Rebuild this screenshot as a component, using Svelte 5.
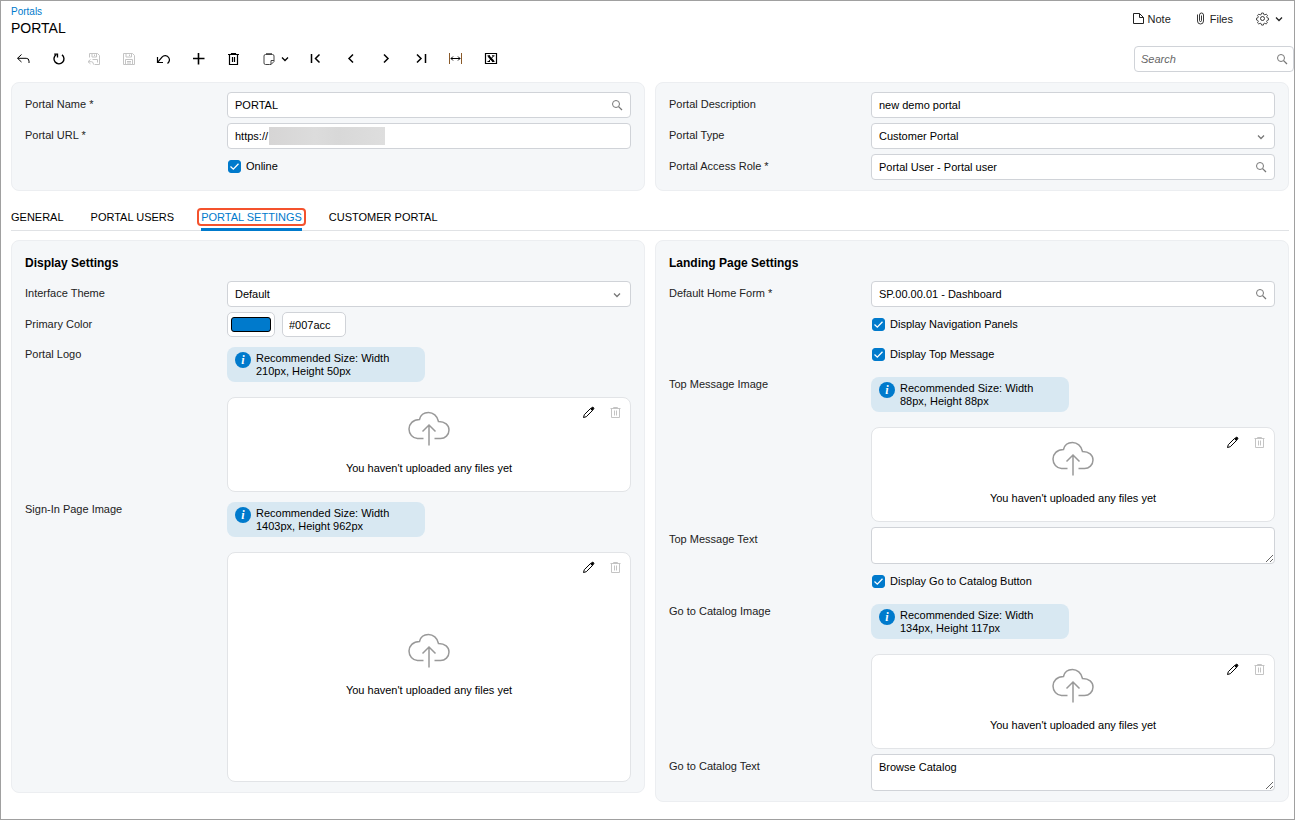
<script lang="ts">
    type Hint = { id: string; label: string; size: string; tall?: boolean };

    let portalName = "PORTAL";
    let portalUrl = "https://";
    let online = true;
    let description = "new demo portal";
    let portalType = "Customer Portal";
    let accessRole = "Portal User - Portal user";

    let theme = "Default";
    let primaryColor = "#007acc";

    let homeForm = "SP.00.00.01 - Dashboard";
    let navigationPanels = true;
    let topMessage = true;
    let topMessageText = "";
    let catalogButton = true;
    let catalogText = "Browse Catalog";

    const tabs = ["GENERAL", "PORTAL USERS", "PORTAL SETTINGS", "CUSTOMER PORTAL"];
    let activeTab = "PORTAL SETTINGS";

    const displayImages: Hint[] = [
        { id: "logo", label: "Portal Logo", size: "210px, Height 50px" },
        { id: "signin", label: "Sign-In Page Image", size: "1403px, Height 962px", tall: true },
    ];
    const topImage: Hint = { id: "top-image", label: "Top Message Image", size: "88px, Height 88px" };
    const catalogImage: Hint = { id: "catalog-image", label: "Go to Catalog Image", size: "134px, Height 117px" };

    const tools = [
        { name: "Back", icon: "back" },
        { name: "Refresh", icon: "refresh" },
        { name: "Save and close", icon: "saveclose", disabled: true },
        { name: "Save", icon: "save", disabled: true },
        { name: "Undo", icon: "undo" },
        { name: "Add", icon: "plus" },
        { name: "Delete", icon: "trash" },
        { name: "Clipboard", icon: "clipboard", menu: true },
        { name: "First", icon: "first" },
        { name: "Previous", icon: "prev" },
        { name: "Next", icon: "next" },
        { name: "Last", icon: "last" },
        { name: "Fit columns", icon: "fit" },
        { name: "Export to Excel", icon: "excel" },
    ];
</script>

{#snippet icon(name: string)}
    <svg class="icon" viewBox="0 0 16 16" width="16" height="16" aria-hidden="true">
        {#if name === "back"}
            <path d="M5.500 3.500 1.500 7.300 5.500 11M1.800 7.300h8.400a2.800 2.800 0 0 1 2.800 2.800v1.900" />
        {:else if name === "refresh"}
            <path d="M5.200 3.700A5 5 0 1 0 11 3.900" stroke-width="1.400" />
            <path d="M3.200 3.200h3.300v3.300" stroke-width="1.300" />
        {:else if name === "save"}
            <path d="M2.500 2.500h9l2 2v9h-11zM5 2.500v3.500h5.500v-3.500M4.500 13.500v-5h7v5M8.500 3.500v1.500M6 10.500h4M6 12h4" />
        {:else if name === "saveclose"}
            <path d="M3.500 6.500v-4h8l2 2v9H8.500M6 2.500v3.500h4.500v-3.500M8.500 3.500v1.500M6.500 8.500h5v3M4.500 8.500l-2.500 2.200 2.500 2.200M2.200 10.700h3.300q2 0 2 2.800" />
        {:else if name === "undo"}
            <path d="M1.500 6v5.500h5.500" stroke-width="1.200" />
            <path d="M1.800 11.200l4.200-5a4.200 4.200 0 0 1 6.800.5c1.200 2 .5 4.200-1.300 5.800" stroke-width="1.200" />
        {:else if name === "plus"}
            <path d="M7.500 2v11.500M2 7.500h11.500" stroke-width="1.600" />
        {:else if name === "trash"}
            <path d="M2 3.500h11M5.500 3v-.500h4V3M3.500 4v9.500h8V4M6.500 6v5M8.500 6v5" stroke-width="1.200" />
        {:else if name === "trash-small"}
            <path d="M2.500 3.500h10M5.500 3.500v-1h4v1M3.500 3.500v9h8v-9M6.500 5.500v5M8.500 5.500v5" />
        {:else if name === "clipboard"}
            <path d="M8.500 13.500H4.500q-1.500 0-1.500-1.500V5q0-1.500 1.500-1.500h7q1.500 0 1.500 1.500v5.500l-3 3h-1.500M13 9.500h-3v4" stroke="#444" />
            <path d="M5 3h6" stroke="#444" stroke-width="1.600" />
        {:else if name === "first"}
            <path d="M3.500 3v9M11.500 3.500 7.500 7.500l4 4" stroke-width="1.500" />
        {:else if name === "prev"}
            <path d="M10 3.500 6 7.500l4 4" stroke-width="1.500" />
        {:else if name === "next"}
            <path d="M6 3.500l4 4-4 4" stroke-width="1.500" />
        {:else if name === "last"}
            <path d="M4 3.500l4 4-4 4M12.500 3v9" stroke-width="1.500" />
        {:else if name === "fit"}
            <path d="M1.500 2v11M13.500 2v11" stroke="#8a5a2a" />
            <path d="M3 7.500h9M5 5.500l-2 2 2 2M10 5.500l2 2-2 2" />
        {:else if name === "excel"}
            <path d="M2.500 2.500h11v10h-11z" stroke-width="1.200" />
            <path d="M5.500 5l5 5.500" stroke-width="2" />
            <path d="M10.500 5l-5 5.500M4.500 4.800h2.500M9 4.800h2.500M4.500 10.500h2.500M9 10.500h2.500" />
        {:else if name === "search"}
            <circle cx="7" cy="7" r="3.500" />
            <path d="M9.600 9.600l3.400 3.400" stroke-width="1.300" />
        {:else if name === "pencil"}
            <path d="M2.500 12.500l.8-2.800 6.200-6.200 2 2-6.200 6.200z" />
            <path d="M9.700 3.800l1.300-1.300q.8-.6 1.500.1t.1 1.500l-1.300 1.300z" fill="currentColor" />
        {:else if name === "note"}
            <path d="M2.500 2.500h6l4 4v6h-10zM8.500 2.500v4h4" />
        {:else if name === "clip"}
            <path d="M4.500 3.500v6.500a3 3 0 0 0 6 0V4a2 2 0 0 0-4 0v5.500a1 1 0 0 0 2 0V4.500" stroke-width=".900" />
        {:else if name === "gear"}
            <circle cx="7.500" cy="7.500" r="2" stroke-width=".900" />
            <path d="M6.600 2h1.800l.4 1.500 1.100.4 1.300-.8 1.300 1.300-.8 1.300.4 1.100 1.400.4V9l-1.400.4-.5 1.100.8 1.300-1.300 1.200-1.300-.8-1.100.5-.3 1.400H6.600l-.4-1.400-1.100-.5-1.300.8-1.300-1.200.8-1.300-.5-1.100L1.500 9V7.200l1.400-.4.4-1.100-.8-1.300 1.300-1.300 1.300.8 1.100-.4z" stroke-width=".800" />
        {/if}
    </svg>
{/snippet}

{#snippet chevron()}
    <svg class="chevron" viewBox="0 0 8 8" width="8" height="8" aria-hidden="true">
        <path d="M1 2.500 4 5.500l3-3" />
    </svg>
{/snippet}

{#snippet tick()}
    <svg class="tick" viewBox="0 0 13 13" width="13" height="13" aria-hidden="true">
        <path d="M2.500 6.500 5.300 9.200 10.500 3.800" />
    </svg>
{/snippet}

{#snippet upload(image: Hint)}
    <span class="label" id={image.id}>{image.label}</span>
    <div class="upload" role="group" aria-labelledby={image.id}>
        <div class="hint">
            <span class="info">i</span>
            <span>Recommended Size: Width {image.size}</span>
        </div>
        <div class="dropzone" class:tall={image.tall}>
            <svg class="cloud" viewBox="0 0 42 36" width="42" height="36" aria-hidden="true">
                <path d="M15.500 27.500H9.500C4.500 27 1 23 1 18s4-9.500 10.500-9.500C12.500 4 16 1.500 20.500 1.500S29.500 5 30.500 10.500C37 10.500 41 14 41 19s-4 8.500-8.500 8.500H26.500" />
                <path d="M21 34.500V14M14.500 20.500 21 14l6.500 6.500" />
            </svg>
            <p>You haven't uploaded any files yet</p>
            <div class="actions">
                <button aria-label="Edit">{@render icon("pencil")}</button>
                <button aria-label="Remove" disabled>{@render icon("trash-small")}</button>
            </div>
        </div>
    </div>
{/snippet}

<div class="page">
    <header>
        <div>
            <a class="crumb" href="#portals">Portals</a>
            <h1>PORTAL</h1>
        </div>
        <div class="links">
            <button class="note">{@render icon("note")}Note</button>
            <button class="files">{@render icon("clip")}Files</button>
            <button class="gear" aria-label="Settings">{@render icon("gear")}{@render chevron()}</button>
        </div>
    </header>

    <div class="toolbar">
        {#each tools as tool}
            <button aria-label={tool.name} disabled={tool.disabled}>
                {@render icon(tool.icon)}
                {#if tool.menu}{@render chevron()}{/if}
            </button>
        {/each}
        <div class="field search">
            <input type="search" placeholder="Search" aria-label="Search" />
            <button aria-label="Run search">{@render icon("search")}</button>
        </div>
    </div>

    <main>
        <div class="columns">
            <section class="panel">
                <label class="label" for="name">Portal Name *</label>
                <div class="field">
                    <input id="name" bind:value={portalName} />
                    <button aria-label="Select portal">{@render icon("search")}</button>
                </div>
                <label class="label" for="url">Portal URL *</label>
                <div class="field">
                    <input id="url" bind:value={portalUrl} />
                    <span class="mask"></span>
                </div>
                <label class="check">
                    <input type="checkbox" bind:checked={online} />{@render tick()}Online
                </label>
            </section>
            <section class="panel">
                <label class="label" for="description">Portal Description</label>
                <div class="field"><input id="description" bind:value={description} /></div>
                <label class="label" for="type">Portal Type</label>
                <div class="field">
                    <select id="type" bind:value={portalType}>
                        <option>Customer Portal</option>
                    </select>
                    {@render chevron()}
                </div>
                <label class="label" for="role">Portal Access Role *</label>
                <div class="field">
                    <input id="role" bind:value={accessRole} />
                    <button aria-label="Select role">{@render icon("search")}</button>
                </div>
            </section>
        </div>

        <div class="tabs" role="tablist">
            {#each tabs as tab}
                <button role="tab" aria-selected={tab === activeTab} class:active={tab === activeTab} on:click={() => (activeTab = tab)}>
                    {tab}
                </button>
            {/each}
        </div>

        <div class="columns">
            <section class="panel">
                <h2>Display Settings</h2>
                <label class="label" for="theme">Interface Theme</label>
                <div class="field">
                    <select id="theme" bind:value={theme}>
                        <option>Default</option>
                    </select>
                    {@render chevron()}
                </div>
                <label class="label" for="hex">Primary Color</label>
                <div class="color">
                    <input type="color" aria-label="Pick primary color" bind:value={primaryColor} />
                    <input id="hex" class="hex" bind:value={primaryColor} />
                </div>
                {#each displayImages as image}
                    {@render upload(image)}
                {/each}
            </section>
            <section class="panel">
                <h2>Landing Page Settings</h2>
                <label class="label" for="home">Default Home Form *</label>
                <div class="field">
                    <input id="home" bind:value={homeForm} />
                    <button aria-label="Select form">{@render icon("search")}</button>
                </div>
                <label class="check">
                    <input type="checkbox" bind:checked={navigationPanels} />{@render tick()}Display Navigation Panels
                </label>
                <label class="check">
                    <input type="checkbox" bind:checked={topMessage} />{@render tick()}Display Top Message
                </label>
                {@render upload(topImage)}
                <label class="label" for="top-text">Top Message Text</label>
                <textarea id="top-text" bind:value={topMessageText}></textarea>
                <label class="check">
                    <input type="checkbox" bind:checked={catalogButton} />{@render tick()}Display Go to Catalog Button
                </label>
                {@render upload(catalogImage)}
                <label class="label" for="catalog-text">Go to Catalog Text</label>
                <textarea id="catalog-text" bind:value={catalogText}></textarea>
            </section>
        </div>
    </main>
</div>

<style>
    .page {
        box-sizing: border-box;
        min-height: 100vh;
        margin-right: 1px;
        border: 1px solid #a0a0a0;
        background: #fff;
        color: #000;
        font: 11px/16px "Liberation Sans", Arial, sans-serif;
    }

    .page * {
        box-sizing: border-box;
    }

    button,
    input,
    select,
    textarea {
        font: inherit;
        color: inherit;
    }

    button {
        display: flex;
        align-items: center;
        padding: 0;
        border: 0;
        background: none;
        cursor: pointer;
    }

    svg {
        flex: none;
        fill: none;
        stroke: currentColor;
    }

    button:disabled {
        color: #c4c4c4;
        cursor: default;
    }

    header {
        display: flex;
        justify-content: space-between;
        align-items: flex-start;
        height: 45px;
        padding: 4px 11px 0 10px;
    }

    .crumb {
        display: block;
        font-size: 10px;
        line-height: 14px;
        color: #007acc;
        text-decoration: none;
    }

    h1 {
        margin: 0;
        font-size: 14px;
        font-weight: normal;
        line-height: 18px;
    }

    .links {
        display: flex;
        gap: 22px;
        padding-top: 6px;
        color: #222;
    }

    .note,
    .files {
        gap: 1px;
    }

    .gear {
        gap: 4px;
    }

    .toolbar {
        display: flex;
        align-items: center;
        gap: 19px;
        padding-left: 15px;
    }

    .toolbar .chevron {
        margin-left: 4px;
    }

    .chevron {
        stroke-width: 1.3;
    }

    .search {
        width: 160px;
        margin-left: auto;
    }

    .search input::placeholder {
        color: #666;
        font-style: italic;
    }

    .search input[type="search"] {
        padding-left: 6px;
    }

    main {
        padding: 10px 5px 16px 10px;
    }

    .columns {
        display: grid;
        grid-template-columns: 1fr 1fr;
        gap: 10px;
        align-items: start;
    }

    .panel {
        display: grid;
        grid-template-columns: minmax(0, 1fr) minmax(0, 2fr);
        row-gap: 5px;
        align-items: start;
        align-content: start;
        min-height: 109px;
        padding: 9px 13px 10px;
        border: 1px solid #eceef1;
        border-radius: 8px;
        background: #f5f7f9;
    }

    h2 {
        grid-column: 1 / -1;
        margin: 0;
        font-size: 12px;
        line-height: 26px;
    }

    .label {
        line-height: 24px;
        color: #222;
    }

    .field {
        position: relative;
        height: 26px;
    }

    .field input,
    .field select,
    .color input,
    textarea {
        display: block;
        width: 100%;
        height: 26px;
        margin: 0;
        padding: 0 7px;
        border: 1px solid #d0d3d8;
        border-radius: 4px;
        background: #fff;
        appearance: none;
        outline: 0;
    }

    textarea {
        height: 37px;
        padding: 4px 7px;
        resize: vertical;
    }

    .field button {
        position: absolute;
        top: 5px;
        right: 6px;
        color: #777;
    }

    .search button {
        right: 4px;
    }

    .field > .chevron {
        position: absolute;
        top: 10px;
        right: 10px;
        color: #777;
        pointer-events: none;
    }

    .mask {
        position: absolute;
        top: 4px;
        left: 42px;
        width: 116px;
        height: 18px;
        background: linear-gradient(90deg, #d6d5d5, #dcdcdc 40%, #d8d8d8 60%, #dedede);
    }

    .check {
        grid-column: 2;
        display: flex;
        align-items: center;
        position: relative;
        height: 24px;
        margin-bottom: 1px;
    }

    .check input {
        width: 13px;
        height: 13px;
        margin: 0 5px 0 1px;
        border: 1px solid #b5b8bd;
        border-radius: 3px;
        background: #fff;
        appearance: none;
    }

    .check input:checked {
        border-color: #007acc;
        background: #007acc;
    }

    .tick {
        position: absolute;
        left: 1px;
        color: #fff;
        stroke-width: 1.3;
        pointer-events: none;
    }

    .tabs {
        display: flex;
        gap: 19px;
        margin: 17px 0 9px;
        border-bottom: 1px solid #e0e2e5;
    }

    .tabs button {
        position: relative;
        height: 18px;
        margin-bottom: 4px;
        padding: 0 2px;
        border: 2px solid transparent;
        border-radius: 4px;
    }

    .tabs button:first-child {
        margin-left: -4px;
    }

    .tabs .active {
        border-color: #f4522d;
        color: #007acc;
    }

    .tabs .active::after {
        content: "";
        position: absolute;
        right: 2px;
        bottom: -7px;
        left: 2px;
        height: 3px;
        background: #007acc;
    }

    .color {
        display: flex;
        gap: 7px;
    }

    .color input {
        height: 25px;
        border-radius: 5px;
    }

    .color input[type="color"] {
        width: 48px;
        padding: 4px 3px;
    }

    .color input::-webkit-color-swatch-wrapper {
        padding: 0;
    }

    .color input::-webkit-color-swatch {
        border: 1px solid #000;
        border-radius: 3px;
    }

    .color .hex {
        width: 64px;
        padding: 0 6px;
    }

    .hint {
        display: flex;
        gap: 5px;
        width: 198px;
        margin: 5px 0 15px;
        padding: 5px 25px 4px 8px;
        border-radius: 8px;
        background: #d8e8f2;
        line-height: 13px;
    }

    .info {
        flex: none;
        width: 16px;
        height: 16px;
        border-radius: 50%;
        background: #007acc;
        color: #fff;
        font: italic bold 12px/16px "Liberation Serif", serif;
        text-align: center;
    }

    .dropzone {
        position: relative;
        display: flex;
        flex-direction: column;
        align-items: center;
        justify-content: center;
        gap: 13px;
        height: 95px;
        padding-bottom: 3px;
        border: 1px solid #e2e4e7;
        border-radius: 8px;
        background: #fff;
    }

    .dropzone.tall {
        height: 230px;
    }

    .dropzone p {
        margin: 0;
    }

    .cloud {
        color: #999;
        stroke-width: 1.5;
    }

    .actions {
        position: absolute;
        top: 7px;
        right: 6px;
        display: flex;
        gap: 11px;
    }
</style>
